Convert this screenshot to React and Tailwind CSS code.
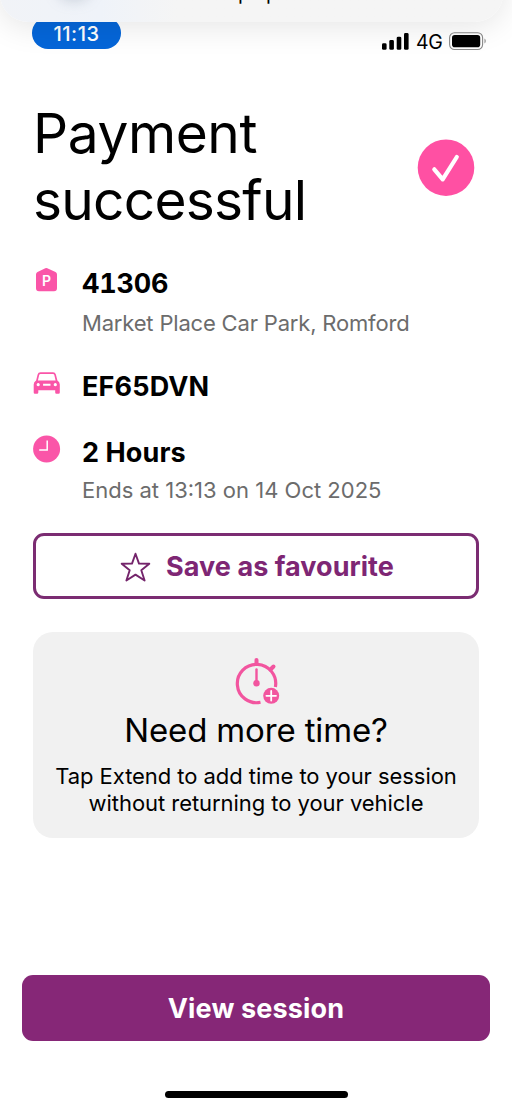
function NotificationBanner() {
  return (
    <div className="absolute left-0 -top-16 w-[503px] h-[86px] rounded-[28px] overflow-hidden bg-gradient-to-r from-[#f1f3f7] from-0% via-[#eff3f9] via-20% to-[#f5f5f5] to-35% shadow-[0_4px_32px_rgba(0,0,0,0.11)]">
      <div className="absolute left-[58px] top-[40px] w-8 h-6 rounded-full bg-slate-500/30 blur-[7px]" />
      <span className="absolute left-[238px] top-[47px] text-[20px] leading-[20px] text-black">p</span>
      <span className="absolute left-[266px] top-[47px] text-[20px] leading-[20px] text-black">p</span>
    </div>
  );
}

function StatusBar() {
  return (
    <header className="flex items-start justify-between h-[64px] pl-[32px] pr-[24px] pt-[17px]">
      <div className="flex items-center justify-center w-[89px] h-8 rounded-full bg-[#0566d9] text-white text-[20px] font-medium leading-none tracking-[0.5px] pt-[2px]">
        11:13
      </div>
      <div className="flex items-center pt-[13px]">
        <svg width="28" height="20" viewBox="0 0 28 20">
          <rect x="0" y="12.3" width="4.6" height="6.5" rx="1.4" />
          <rect x="7.3" y="9" width="4.6" height="9.8" rx="1.4" />
          <rect x="14.7" y="5.7" width="4.6" height="13.1" rx="1.4" />
          <rect x="22" y="2" width="4.6" height="16.8" rx="1.4" />
        </svg>
        <span className="ml-[6px] w-[27px] text-[19.5px] leading-5 tracking-[-0.3px] pt-[2px]">4G</span>
        <svg className="ml-[6px]" width="39" height="20" viewBox="0 0 39 20" fill="none">
          <rect x="0.6" y="1.7" width="33" height="16.8" rx="5" stroke="#8a8a8a" strokeWidth="1.1" />
          <rect x="3" y="4" width="28.2" height="12.2" rx="2.8" fill="#000" />
          <path d="M35.5 7.6c1.6.7 1.6 4.3 0 5z" fill="#8a8a8a" />
        </svg>
      </div>
    </header>
  );
}

function ParkingIcon() {
  return (
    <svg className="mt-[2px]" width="28" height="28" viewBox="0 0 28 28">
      <path
        d="M12.3 1.2q1-.6 2 0l8.2 3.9q1.5.8 1.5 2.4v13.7q0 3-3 3H6q-3 0-3-3V7.5q0-1.6 1.5-2.4z"
        fill="#fa55a8"
      />
      <text x="13.6" y="19" textAnchor="middle" fontSize="14" fontWeight="600" fill="#fff">
        P
      </text>
    </svg>
  );
}

function CarIcon() {
  return (
    <svg className="mt-[2px]" width="28" height="28" viewBox="0 0 28 28">
      <path
        fill="#fa55a8"
        fillRule="evenodd"
        d="M7.5 1.3h12.5q2.3 0 2.9 2.2l1.500 6.100q2.400 1.300 2.400 4v8q0 1.200-1.200 1.200h-2.200q-1.200 0-1.200-1.200v-2.400H5.300v2.400q0 1.200-1.200 1.200H1.900q-1.200 0-1.200-1.200v-8q0-2.700 2.400-4l1.500-6.100q.6-2.200 2.900-2.200zm0 1.800q-1 0-1.300 1L4.900 9.400h17.700L21.300 4.100q-.3-1-1.300-1zM5.200 12.100a1.600 1.600 0 1 0 .01 0zm17.100 0a1.600 1.600 0 1 0 .01 0zM10.100 12.800v2h7.400v-2z"
      />
    </svg>
  );
}

function ClockIcon() {
  return (
    <svg width="28" height="28" viewBox="0 0 28 28" fill="none">
      <circle cx="13.6" cy="14" r="13.5" fill="#fa55a8" />
      <path d="M14.2 5.5v9.4H6.2" stroke="#fff" strokeWidth="1.5" />
    </svg>
  );
}

function TimerIcon() {
  return (
    <svg className="ml-1" width="48" height="48" viewBox="0 0 48 48" fill="none" stroke="#f2559f">
      <path d="M26.5 44.3A19.2 19.2 0 1 1 41.4 29" strokeWidth="3.2" />
      <path d="M22.5 2v4M36.5 11.5l3-3" strokeWidth="4" strokeLinecap="round" />
      <path d="M22.5 11.5v13" strokeWidth="2.4" strokeLinecap="round" />
      <circle cx="22.5" cy="25.3" r="3.2" fill="#f2559f" stroke="none" />
      <circle cx="37.2" cy="37.8" r="8" fill="#f2559f" stroke="none" />
      <path d="M37.2 33v9.6M32.4 37.8H42" stroke="#fff" strokeWidth="1.8" strokeLinecap="round" />
    </svg>
  );
}

export default function App() {
  return (
    <div className="relative flex flex-col w-[512px] h-[1109px] overflow-hidden bg-white text-black font-['Inter',sans-serif]">
      <StatusBar />
      <NotificationBanner />

      <main className="px-[33px] pt-[37px]">
        <div className="flex items-center justify-between h-[132px] pr-1">
          <h1 className="text-[55px] leading-[67px] font-normal">
            <span className="block tracking-[-0.4px]">Payment</span>
            <span className="block tracking-[-0.75px]">successful</span>
          </h1>
          <svg className="mt-px" width="58" height="58" viewBox="0 0 58 58" fill="none">
            <circle cx="29" cy="28.7" r="28.3" fill="#ff50a3" />
            <path
              d="M17.3 30.3 25.7 40.3 39.8 18"
              stroke="#fff"
              strokeWidth="4.2"
              strokeLinecap="round"
              strokeLinejoin="round"
            />
          </svg>
        </div>

        <section className="flex gap-[21px] mt-[32px] h-[104px]">
          <ParkingIcon />
          <div>
            <h2 className="text-[27px] leading-[38px] font-bold tracking-[-0.2px] tabular-nums">41306</h2>
            <p className="mt-[4px] text-[22px] leading-[32px] font-normal tracking-[-0.18px] text-[#6c6c6c]">
              Market Place Car Park, Romford
            </p>
          </div>
        </section>

        <section className="flex gap-[21px] h-[66px]">
          <CarIcon />
          <h2 className="text-[27px] leading-[36px] font-bold tracking-[0.15px]">EF65DVN</h2>
        </section>

        <section className="flex gap-[21px] h-[98px]">
          <ClockIcon />
          <div>
            <h2 className="text-[27px] leading-[36px] font-bold tracking-[0.1px]">2 Hours</h2>
            <p className="mt-[3px] text-[22px] leading-[32px] font-normal text-[#6c6c6c]">
              Ends at 13:13 on 14 Oct 2025
            </p>
          </div>
        </section>

        <button
          type="button"
          className="flex items-center justify-center w-[446px] h-[66px] rounded-[11px] border-3 border-[#7b2c72] pt-[2px] pl-[2px] text-[27px] font-bold tracking-[0.05px] text-[#7e2674]"
        >
          <svg className="mr-[15px]" width="31" height="31" viewBox="0 0 31 31" fill="none">
            <path
              d="M15.5 1.7 19 11.6 29.3 11.7 21.3 18.2 24.6 28.5 15.5 22.6 6.4 28.5 9.7 18.2 1.7 11.7 12 11.6z"
              stroke="#74246b"
              strokeWidth="1.9"
              strokeLinejoin="round"
            />
          </svg>
          Save as favourite
        </button>

        <section className="flex flex-col items-center w-[446px] h-[206px] mt-[33px] pt-[26px] rounded-[20px] bg-[#f1f1f1] text-center">
          <TimerIcon />
          <h3 className="mt-[4px] text-[33px] leading-[40px] font-normal tracking-[-0.15px]">Need more time?</h3>
          <p className="mt-[13px] text-[22px] leading-[27px] font-normal tracking-[-0.05px] whitespace-nowrap">
            Tap Extend to add time to your session
            <br />
            without returning to your vehicle
          </p>
        </section>
      </main>

      <footer className="flex flex-col items-center mt-auto pb-[11px]">
        <button
          type="button"
          className="w-[468px] h-[66px] rounded-[11px] bg-[#862777] pt-[2px] text-[27px] font-bold tracking-[0.15px] text-white"
        >
          View session
        </button>
        <div className="w-[183px] h-[7px] mt-[50px] rounded-full bg-black" />
      </footer>
    </div>
  );
}
